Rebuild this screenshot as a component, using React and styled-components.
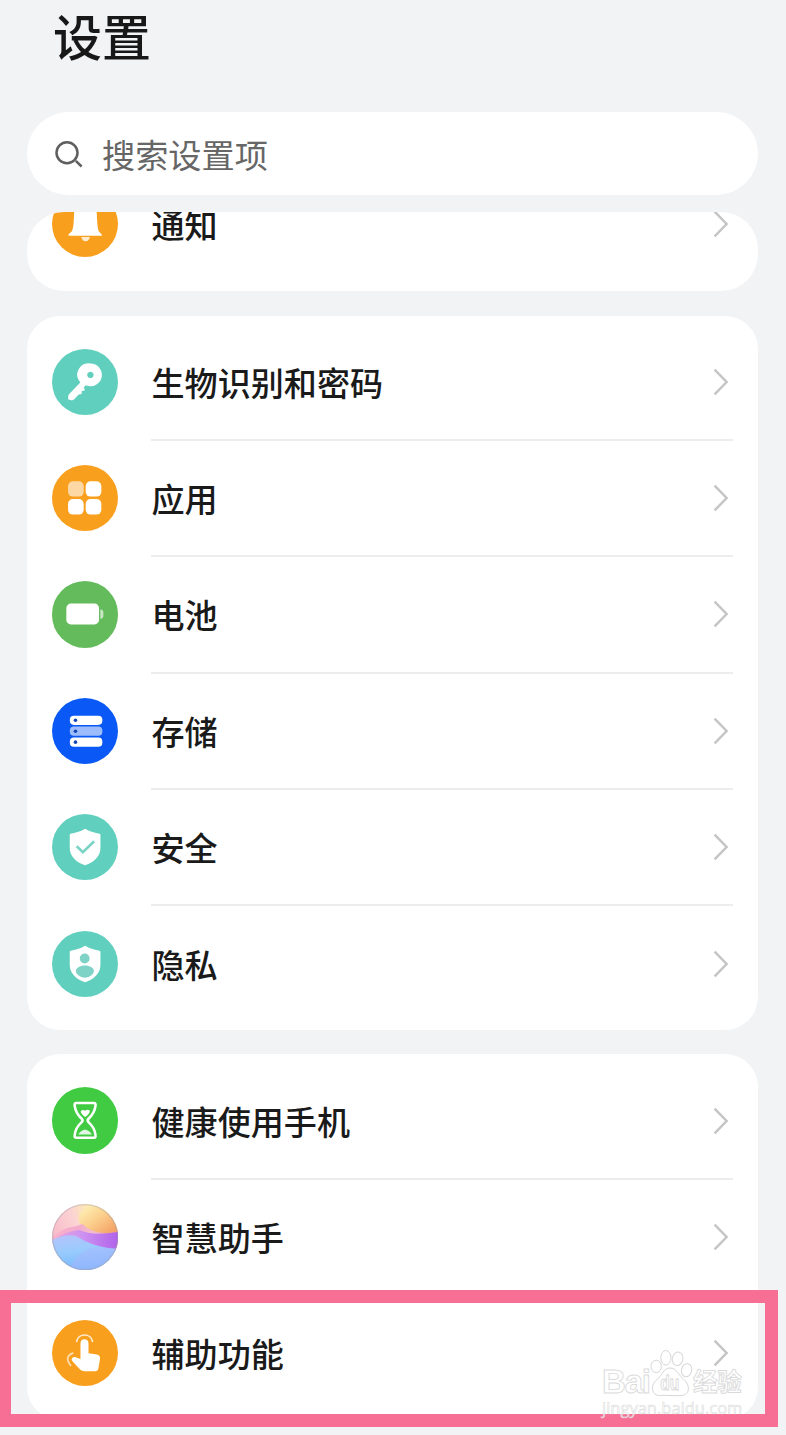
import styled, { createGlobalStyle } from "styled-components"

const SHIELD = "M33 14.7 C38 17.6 43 19 47.4 19.6 Q48.3 19.8 48.3 20.8 V34 C48.3 42.5 42 48 33 51.2 C24 48 17.7 42.5 17.7 34 V20.8 Q17.7 19.8 18.6 19.6 C23 19 28 17.6 33 14.7 Z"

const BellIcon = () => (
    <svg viewBox="0 0 66 66">
        <path fill="#fff" d="M33.3 12 C26 12 22.3 17 22 23 C21.7 32 21.3 38 19.6 40.4 L16.3 43.4 Q16.3 44.6 17.5 44.6 H48.7 Q50 44.6 49.7 43.4 L46.8 40.4 C45.6 38 45 32 44.7 23 C44.4 17 40.6 12 33.3 12 Z" />
        <path fill="#fff" opacity="0.8" d="M29.2 45.8 H37.8 Q36.7 50 33.5 50 T29.2 45.8 Z" />
    </svg>
)

const KeyIcon = () => (
    <svg viewBox="0 0 66 66">
        <path fill="#fff" fillRule="evenodd" d="M38.3 14.5 a11.3 11.3 0 1 1 -4.5 21.6 L31.6 38.3 L32.6 40.3 Q32.8 41.4 31.6 41.6 L29.5 41.9 L29.6 43.8 Q29.6 45 28.4 45.1 L26.6 45.4 L22.2 50.2 Q21 51.4 19.3 51.1 L17.2 50.6 Q15.9 50.2 16 48.8 L16.3 46.6 Q16.4 45.6 17.2 44.8 L28.2 33.3 A11.3 11.3 0 0 1 38.3 14.5 Z M38.3 22.6 a3.2 3.2 0 1 0 0.01 0 Z" />
    </svg>
)

const AppsIcon = () => (
    <svg viewBox="0 0 66 66" fill="#fff">
        <rect x="16" y="16.3" width="15.6" height="15.2" rx="4.8" opacity="0.6" />
        <rect x="33.6" y="16.3" width="15.6" height="15.2" rx="4.8" />
        <rect x="16" y="34" width="15.6" height="15.4" rx="4.8" />
        <rect x="33.6" y="34" width="15.6" height="15.4" rx="4.8" />
    </svg>
)

const BatteryIcon = () => (
    <svg viewBox="0 0 66 66" fill="#fff">
        <rect x="14.3" y="22.5" width="32.6" height="20.8" rx="4.5" />
        <path opacity="0.65" d="M48.2 28.3 Q51.2 28.5 51.2 31 V35 Q51.2 37.6 48.2 37.8 Z" />
    </svg>
)

const StorageIcon = () => (
    <svg viewBox="0 0 66 66" fill="#fff">
        <rect x="17.8" y="17.6" width="32.4" height="9.2" rx="4" />
        <rect x="17.8" y="28.5" width="32.4" height="9.2" rx="4" opacity="0.6" />
        <rect x="17.8" y="39.4" width="32.4" height="9.2" rx="4" />
        <g fill="#1247b8">
            <circle cx="23.4" cy="22.2" r="1.8" />
            <circle cx="23.4" cy="33.1" r="1.8" />
            <circle cx="23.4" cy="44" r="1.8" />
        </g>
    </svg>
)

const SecurityIcon = () => (
    <svg viewBox="0 0 66 66">
        <path d={SHIELD} fill="#fff" />
        <path d="M24.6 32.2 L30.8 38 L42 27.2" fill="none" stroke="#7bd3c5" strokeWidth="2.6" />
    </svg>
)

const PrivacyIcon = () => (
    <svg viewBox="0 0 66 66">
        <path d={SHIELD} fill="#fff" />
        <circle cx="32.6" cy="27.4" r="4.9" fill="#7fd3c6" />
        <path d="M32.8 34.3 C38 34.3 41.8 37 41.8 40 C41.8 43.3 37 46.6 32.8 46.6 S23.8 43.3 23.8 40 C23.8 37 27.6 34.3 32.8 34.3 Z" fill="#7fd3c6" />
    </svg>
)

const HourglassIcon = () => (
    <svg viewBox="0 0 66 66">
        <path fill="none" stroke="#fff" strokeWidth="2.6" strokeLinejoin="round" d="M24.2 16 H41.8 Q43.8 16 43.4 18.6 C42.6 25 40 28.4 36.4 31.6 Q34.8 33.3 36.4 35 C40 38.2 42.6 41.4 43.4 48 Q43.8 50.6 41.8 50.6 H24.2 Q22.2 50.6 22.6 48 C23.4 41.4 26 38.2 29.6 35 Q31.2 33.3 29.6 31.6 C26 28.4 23.4 25 22.6 18.6 Q22.2 16 24.2 16 Z" />
        <path fill="#fff" d="M28.6 24.2 Q31 21.8 33 23.8 Q35 21.8 37.8 23.8 Q37.4 27.2 33.2 30 Q29 27.4 28.6 24.2 Z" />
        <path fill="#fff" opacity="0.85" d="M26.2 47.4 Q28.4 43.4 33 42.4 Q37.6 43.4 39.8 47.4 Z" />
    </svg>
)

const AssistantIcon = () => (
    <svg viewBox="0 0 66 66">
        <defs>
            <clipPath id="orb"><circle cx="33" cy="33" r="33" /></clipPath>
            <linearGradient id="sky" x1="0" y1="0.4" x2="1" y2="0">
                <stop offset="0" stopColor="#f9bccb" />
                <stop offset="0.35" stopColor="#fbd3d3" />
                <stop offset="0.6" stopColor="#fdeaaf" />
                <stop offset="1" stopColor="#fcd98c" />
            </linearGradient>
            <linearGradient id="sun" x1="0.1" y1="0" x2="0.9" y2="0.8">
                <stop offset="0" stopColor="#fdf0b6" />
                <stop offset="0.5" stopColor="#fbcf8c" />
                <stop offset="1" stopColor="#f4a468" />
            </linearGradient>
            <linearGradient id="rose" x1="0" y1="0" x2="1" y2="0">
                <stop offset="0" stopColor="#f7b0cb" />
                <stop offset="0.4" stopColor="#f3a6cc" />
                <stop offset="0.65" stopColor="#f0bcd2" />
                <stop offset="1" stopColor="#ea86b0" />
            </linearGradient>
            <linearGradient id="violet" x1="0" y1="0" x2="1" y2="0">
                <stop offset="0" stopColor="#e6a3de" />
                <stop offset="0.4" stopColor="#ce93f0" />
                <stop offset="1" stopColor="#b062ea" />
            </linearGradient>
            <linearGradient id="sea" x1="0.3" y1="0" x2="0.5" y2="1">
                <stop offset="0" stopColor="#b3c4fb" />
                <stop offset="0.45" stopColor="#98cbfd" />
                <stop offset="1" stopColor="#74b8fb" />
            </linearGradient>
        </defs>
        <g clipPath="url(#orb)">
            <rect width="66" height="66" fill="url(#sky)" />
            <path d="M27 10 Q34 1 48 2 L66 10 V31 Q42 34 27 18 Z" fill="url(#sun)" />
            <path d="M0 34 Q10 24 20 23 Q26 22 30 20 Q44 33 66 27 V46 H0 Z" fill="url(#rose)" opacity="0.9" />
            <path d="M4 34 Q16 27 27 26 Q40 32 66 28 V48 H4 Z" fill="url(#violet)" />
            <path d="M0 36 Q14 29 24 32 Q42 44 66 45 V66 H0 Z" fill="url(#sea)" />
            <path d="M16 66 Q22 52 34 46 Q46 41 66 45 V58 Q46 62 40 66 Z" fill="#a9b6fd" opacity="0.5" />
        </g>
        <circle cx="33" cy="33" r="32.4" fill="none" stroke="#9c9aa8" strokeOpacity="0.4" strokeWidth="1.2" />
    </svg>
)

const TouchIcon = () => (
    <svg viewBox="0 0 66 66">
        <path fill="#fff" d="M28.4 23.4 Q28.6 19.2 32.4 19.2 T36.4 23.4 V33.2 L44.8 34.4 Q48.2 35.2 47.9 38.6 L46.2 48.6 Q45.6 51.2 43 51.2 H32.4 Q29.8 51.2 28 49.4 L20.4 41.2 Q18.8 39.2 20.2 37.8 Q21.6 36.6 23.6 37.2 L28.4 38.8 Z" />
        <path fill="none" stroke="#fff" strokeWidth="1.7" strokeLinecap="round" opacity="0.8" d="M24.6 21.4 C26 12.8 39 12.8 40.4 21.4" />
        <path fill="none" stroke="#fff" strokeWidth="1.7" strokeLinecap="round" opacity="0.65" d="M20.6 33 C14.6 35.4 14.2 40.2 18.6 45.2" />
    </svg>
)

const SearchIcon = () => (
    <svg width="30" height="30" viewBox="0 0 30 30" fill="none" stroke="#5f5f5f" strokeWidth="2.5">
        <circle cx="13" cy="13.8" r="10.5" />
        <path d="M21.8 21.9 L27.6 27.5" />
    </svg>
)

const Chevron = () => (
    <svg width="16" height="28" viewBox="0 0 16 28" fill="none" stroke="#c5c5c5" strokeWidth="2.5">
        <path d="M1.6 1.6 L13.6 14 L1.6 26.4" />
    </svg>
)

const security = [
    { name: "生物识别和密码", color: "#61cfbd", icon: <KeyIcon /> },
    { name: "应用", color: "#f99f1e", icon: <AppsIcon /> },
    { name: "电池", color: "#64bb5c", icon: <BatteryIcon /> },
    { name: "存储", color: "#0a59f7", icon: <StorageIcon /> },
    { name: "安全", color: "#61cfbd", icon: <SecurityIcon /> },
    { name: "隐私", color: "#61cfbd", icon: <PrivacyIcon /> },
]

const assist = [
    { name: "健康使用手机", color: "#41cb43", icon: <HourglassIcon /> },
    { name: "智慧助手", color: "transparent", icon: <AssistantIcon /> },
    { name: "辅助功能", color: "#f99f1e", icon: <TouchIcon /> },
]

function SettingRow({ item }) {
    return (
        <Row>
            <Badge $color={item.color}>{item.icon}</Badge>
            <RowBody>
                <Label>{item.name}</Label>
                <Chevron />
            </RowBody>
        </Row>
    )
}

function Watermark() {
    return (
        <StyledWatermark>
            <Brand>
                <BrandText>Bai</BrandText>
                <svg width="43" height="48" viewBox="0 0 43 48" fill="#fff" stroke="#d6d6d6" strokeWidth="1">
                    <ellipse cx="6.2" cy="17.4" rx="5.2" ry="6.2" />
                    <ellipse cx="15.9" cy="8.8" rx="5.1" ry="7.3" />
                    <ellipse cx="27.6" cy="9.8" rx="5.3" ry="6.8" transform="rotate(12 27.6 9.8)" />
                    <ellipse cx="36.6" cy="21.2" rx="5.1" ry="6.6" transform="rotate(12 36.6 21.2)" />
                    <path d="M20 19 C26.5 19 28 25.4 32.6 29.2 C40.6 35.6 40.4 45.6 31.6 46.5 C26 47 16 46 10.4 46.5 C1.4 47 -0.4 36.6 7 30.4 C12.6 26 13.4 19 20 19 Z" />
                    <text x="10.2" y="41" textLength="19" lengthAdjust="spacingAndGlyphs" fontFamily="Liberation Sans, sans-serif" fontWeight="bold" fontSize="20" strokeWidth="0.9">du</text>
                </svg>
                <BrandText $cjk>经验</BrandText>
            </Brand>
            <Site>jingyan.baidu.com</Site>
        </StyledWatermark>
    )
}

export default function App() {
    return (
        <Page>
            <GlobalStyle />
            <Title>设置</Title>
            <SearchBar>
                <SearchIcon />
                <span>搜索设置项</span>
            </SearchBar>
            <ClippedCard>
                <SettingRow item={{ name: "通知", color: "#f99f1e", icon: <BellIcon /> }} />
            </ClippedCard>
            <Card>
                {security.map((item) => <SettingRow key={item.name} item={item} />)}
            </Card>
            <Card>
                {assist.map((item) => <SettingRow key={item.name} item={item} />)}
            </Card>
            <Highlight />
            <Watermark />
        </Page>
    )
}

const GlobalStyle = createGlobalStyle`
    *{
        box-sizing: border-box;
    }
    body{
        margin: 0;
        background: #f1f3f5;
        font-family: "Noto Sans CJK SC", sans-serif;
    }
`

const Page = styled.div`
    position: relative;
    width: 786px;
    height: 1435px;
    padding: 0 28px 0 27px;
    overflow: hidden;
    background: #f1f3f5;
`

const Title = styled.h1`
    margin: 0;
    height: 112px;
    padding: 0 0 0 26px;
    font-size: 49px;
    line-height: 70px;
    font-weight: 500;
    color: #181818;
`

const SearchBar = styled.div`
    display: flex;
    align-items: center;
    height: 83px;
    padding-left: 27px;
    gap: 18px;
    border-radius: 42px;
    background: #fff;
    font-size: 33.2px;
    line-height: 48px;
    color: #666;
`

const Card = styled.section`
    margin-top: 24.5px;
    padding: 8px 25px;
    border-radius: 33px;
    background: #fff;
`

/* list scrolled under the search bar, only the bottom of the row is left */
const ClippedCard = styled(Card)`
    display: flex;
    flex-direction: column;
    justify-content: flex-end;
    height: 79.5px;
    margin-top: 16.5px;
    padding: 0 25px 9px;
    border-radius: 37px;
    overflow: hidden;
`

const Row = styled.div`
    display: flex;
    align-items: center;
    flex-shrink: 0;
    height: 116.4px;
    gap: 33.3px;
`

const RowBody = styled.div`
    display: flex;
    align-items: center;
    justify-content: space-between;
    flex: 1;
    height: 100%;
    margin-top: 2px;
    padding: 0 4px 0 0;
    border-bottom: 2px solid #ededed;
    ${Row}:last-child &{
        border-bottom-color: transparent;
    }
`

const Badge = styled.div`
    flex: none;
    width: 66.2px;
    height: 66.2px;
    border-radius: 50%;
    background: ${(props) => props.$color};
    svg{
        display: block;
    }
`

const Label = styled.span`
    font-size: 33.1px;
    line-height: 48px;
    font-weight: 500;
    color: #1a1a1a;
`

/* marker drawn over the last row */
const Highlight = styled.div`
    position: absolute;
    left: -2px;
    top: 1290px;
    width: 780px;
    height: 137px;
    border: 13.5px solid #f76f95;
`

const StyledWatermark = styled.div`
    position: absolute;
    left: 602px;
    top: 1349px;
    width: 144px;
`

const Brand = styled.div`
    display: flex;
    align-items: flex-end;
    height: 48px;
`

const BrandText = styled.span`
    flex: none;
    width: 48px;
    font-family: ${(props) => props.$cjk ? '"Noto Sans CJK SC"' : '"Liberation Sans"'}, sans-serif;
    font-size: ${(props) => props.$cjk ? "24.5px" : "33px"};
    line-height: ${(props) => props.$cjk ? "32px" : "31px"};
    font-weight: bold;
    letter-spacing: ${(props) => props.$cjk ? "-0.3px" : "-1.2px"};
    white-space: nowrap;
    color: #fff;
    -webkit-text-stroke: 0.9px #dadada;
`

const Site = styled.div`
    font-family: "Open Sans", sans-serif;
    font-size: 16.5px;
    line-height: 22px;
    white-space: nowrap;
    color: rgba(255, 255, 255, 0.75);
    -webkit-text-stroke: 0.7px rgba(210, 210, 210, 0.7);
`
